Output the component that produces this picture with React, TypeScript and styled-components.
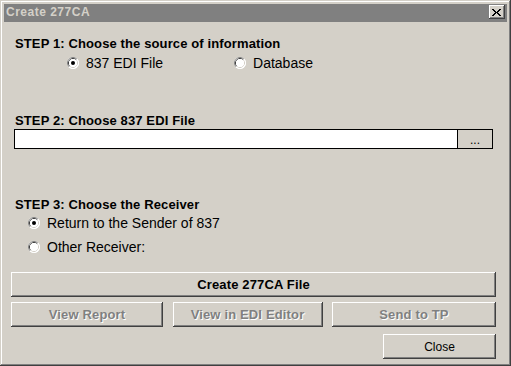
import React from "react";
import styled, { createGlobalStyle } from "styled-components";

const Global = createGlobalStyle`
  html, body { margin: 0; padding: 0; background: #d4d0c8; }
  * { box-sizing: border-box; }
`;

const Window = styled.div`
  width: 511px;
  height: 366px;
  padding: 4px;
  background: #d4d0c8;
  box-shadow: inset -1px -1px #404040, inset 1px 1px #d4d0c8,
    inset -2px -2px #808080, inset 2px 2px #ffffff;
  display: flex;
  flex-direction: column;
  font-family: "Liberation Sans", Arial, sans-serif;
  color: #000;
`;

const TitleBar = styled.div`
  height: 18px;
  background: #808080;
  display: flex;
  align-items: center;
  justify-content: space-between;
  padding: 0 2px 2px 2px;
`;

const TitleText = styled.span`
  font-weight: bold;
  font-size: 12px;
  letter-spacing: 0.5px;
  color: #d4d0c8;
  line-height: 14px;
`;

const TitleButton = styled.div`
  width: 16px;
  height: 14px;
  background: #d4d0c8;
  display: flex;
  align-items: center;
  justify-content: center;
  box-shadow: inset -1px -1px #404040, inset 1px 1px #ffffff,
    inset -2px -2px #808080, inset 2px 2px #d4d0c8;
  padding-right: 1px;
`;

const Body = styled.div`
  flex: 1;
  display: flex;
  flex-direction: column;
  padding: 0 11px 0 7px;
`;

const StepLabel = styled.div<{ $top: number }>`
  margin-top: ${(p) => p.$top}px;
  padding-left: 4px;
  font-weight: bold;
  font-size: 13px;
  letter-spacing: 0.12px;
  line-height: 15px;
  height: 15px;
`;

const RadioRow = styled.div<{ $top: number; $indent: number; $gap?: number }>`
  margin-top: ${(p) => p.$top}px;
  padding-left: ${(p) => p.$indent}px;
  display: flex;
  gap: ${(p) => p.$gap ?? 0}px;
  height: 16px;
`;

const RadioItem = styled.label`
  display: flex;
  align-items: center;
  gap: 7px;
  font-size: 14px;
  line-height: 16px;
`;

const FileField = styled.div`
  margin: 1px 3px 0 3px;
  height: 20px;
  border: 1px solid #000;
  display: flex;
`;

const FileInput = styled.div`
  flex: 1;
  background: #fff;
`;

const BrowseButton = styled.div`
  width: 35px;
  border-left: 1px solid #000;
  background: #d4d0c8;
  font-size: 12px;
  display: flex;
  align-items: center;
  justify-content: center;
  padding-top: 2px;
`;

const Button = styled.div<{ $width?: number; $bold?: boolean; $disabled?: boolean }>`
  ${(p) => (p.$width ? `width: ${p.$width}px;` : "")}
  height: 25px;
  background: #d4d0c8;
  box-shadow: inset -1px -1px #404040, inset 1px 1px #ffffff,
    inset -2px -2px #808080, inset 2px 2px #d4d0c8;
  display: flex;
  align-items: center;
  justify-content: center;
  font-size: ${(p) => (p.$bold ? 13 : 12)}px;
  font-weight: ${(p) => (p.$bold ? "bold" : "normal")};
  letter-spacing: ${(p) => (p.$bold ? 0.15 : 0)}px;
  color: ${(p) => (p.$disabled ? "#808080" : "#000")};
  text-shadow: ${(p) => (p.$disabled ? "1px 1px 0 #ffffff" : "none")};
`;

const CreateButton = styled(Button)`
  margin-top: 17px;
`;

const ButtonRow = styled.div`
  margin-top: 5px;
  display: flex;
  justify-content: space-between;
`;

const CloseRow = styled.div`
  margin-top: 7px;
  display: flex;
  justify-content: flex-end;
`;

const RadioIcon: React.FC<{ checked?: boolean }> = ({ checked }) => (
  <svg width="12" height="12" viewBox="0 0 12 12">
    <circle cx="6" cy="6" r="6" fill="#ffffff" />
    <path d="M2.11 9.89 A5.5 5.5 0 0 1 9.89 2.11" stroke="#808080" fill="none" />
    <path d="M9.89 2.11 A5.5 5.5 0 0 1 2.11 9.89" stroke="#ffffff" fill="none" />
    <path d="M2.82 9.18 A4.5 4.5 0 0 1 9.18 2.82" stroke="#404040" fill="none" />
    <path d="M9.18 2.82 A4.5 4.5 0 0 1 2.82 9.18" stroke="#d4d0c8" fill="none" />
    <circle cx="6" cy="6" r="4" fill="#ffffff" />
    {checked && <circle cx="6" cy="6" r="2" fill="#000" />}
  </svg>
);

const xPattern = [
  "XX.....XX",
  ".XX...XX.",
  "..XX.XX..",
  "...XXX...",
  "..XX.XX..",
  ".XX...XX.",
  "XX.....XX",
];

const CloseGlyph = () => (
  <svg width="9" height="7" viewBox="0 0 9 7" shapeRendering="crispEdges">
    {xPattern.flatMap((row, y) =>
      row.split("").map((c, x) =>
        c === "X" ? <rect key={`${x}-${y}`} x={x} y={y} width="1" height="1" fill="#000" /> : null
      )
    )}
  </svg>
);

export default function App() {
  return (
    <>
      <Global />
      <Window>
        <TitleBar>
          <TitleText>Create 277CA</TitleText>
          <TitleButton>
            <CloseGlyph />
          </TitleButton>
        </TitleBar>
        <Body>
          <StepLabel $top={14}>STEP 1: Choose the source of information</StepLabel>
          <RadioRow $top={4} $indent={56} $gap={71}>
            <RadioItem>
              <RadioIcon checked />
              837 EDI File
            </RadioItem>
            <RadioItem>
              <RadioIcon />
              Database
            </RadioItem>
          </RadioRow>

          <StepLabel $top={42}>STEP 2: Choose 837 EDI File</StepLabel>
          <FileField>
            <FileInput />
            <BrowseButton>...</BrowseButton>
          </FileField>

          <StepLabel $top={48}>STEP 3: Choose the Receiver</StepLabel>
          <RadioRow $top={3} $indent={17}>
            <RadioItem>
              <RadioIcon checked />
              Return to the Sender of 837
            </RadioItem>
          </RadioRow>
          <RadioRow $top={8} $indent={17}>
            <RadioItem>
              <RadioIcon />
              Other Receiver:
            </RadioItem>
          </RadioRow>

          <CreateButton $bold>Create 277CA File</CreateButton>
          <ButtonRow>
            <Button $width={152} $bold $disabled>View Report</Button>
            <Button $width={150} $bold $disabled>View in EDI Editor</Button>
            <Button $width={164} $bold $disabled>Send to TP</Button>
          </ButtonRow>
          <CloseRow>
            <Button $width={113}>Close</Button>
          </CloseRow>
        </Body>
      </Window>
    </>
  );
}
